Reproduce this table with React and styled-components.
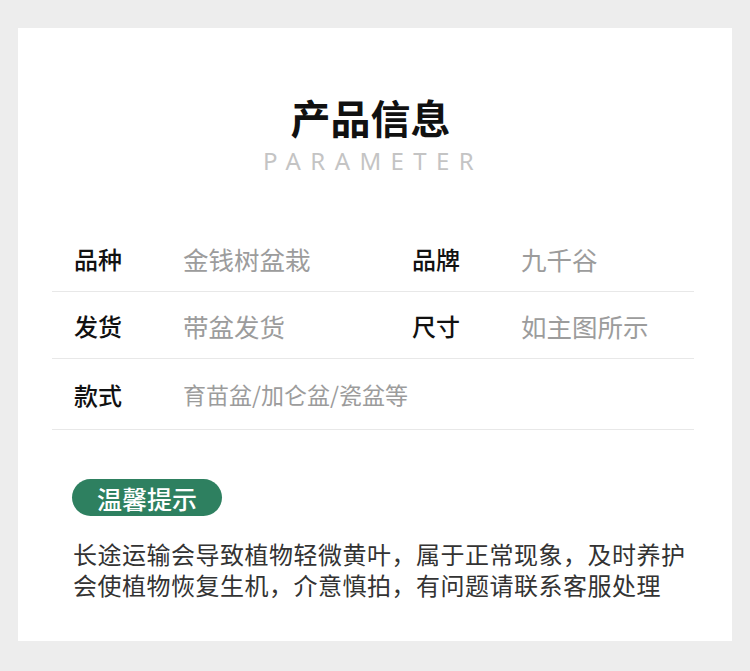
import React from "react";
import styled, { createGlobalStyle } from "styled-components";

const GlobalStyle = createGlobalStyle`
  html, body {
    margin: 0;
    padding: 0;
    background: #ededed;
    font-family: "Noto Sans CJK SC", "Noto Sans", sans-serif;
  }
`;

const Page = styled.div`
  padding: 28px 18px 30px;
`;

const Card = styled.div`
  background: #ffffff;
  padding: 69px 38px 40px 34px;
  height: 613px;
  box-sizing: border-box;
`;

const Title = styled.h1`
  margin: 0;
  padding-right: 5px;
  font-size: 40px;
  line-height: 40px;
  font-weight: 700;
  color: #111;
  text-align: center;
`;

const SubTitle = styled.div`
  margin-top: 12px;
  font-family: "Noto Sans", sans-serif;
  font-size: 24px;
  line-height: 24px;
  letter-spacing: 9.4px;
  color: #c4c4c4;
  text-align: center;
`;

const Table = styled.div`
  margin-top: 52px;
`;

const Row = styled.div`
  display: grid;
  grid-template-columns: 109px 229px 109px 1fr;
  align-items: center;
  height: ${(p) => p.$h || 66}px;
  padding-left: 22px;
  border-bottom: 1px solid #e8e8e8;
`;

const Label = styled.div`
  font-size: 24px;
  color: #111;
  font-weight: 500;
`;

const Value = styled.div`
  font-size: ${(p) => p.$size || 25.5}px;
  color: #9c9c9c;
  white-space: nowrap;
`;

const WideValue = styled(Value)`
  grid-column: 2 / span 3;
`;

const Notice = styled.div`
  margin-top: 49px;
  padding-left: 20px;
`;

const Badge = styled.span`
  display: inline-flex;
  align-items: center;
  height: 37px;
  padding: 0 25px;
  border-radius: 19px;
  background: #2e8060;
  color: #ffffff;
  font-size: 25px;
  font-weight: 500;
`;

const NoticeText = styled.p`
  margin: 22px 0 0;
  font-size: 24px;
  line-height: 31px;
  letter-spacing: 0.5px;
  color: #333;
  padding-left: 1px;
  white-space: nowrap;
`;

const rows = [
  [["品种", "金钱树盆栽"], ["品牌", "九千谷"]],
  [["发货", "带盆发货"], ["尺寸", "如主图所示"]],
];

export default function App() {
  return (
    <Page>
      <GlobalStyle />
      <Card>
        <Title>产品信息</Title>
        <SubTitle>PARAMETER</SubTitle>
        <Table>
          {rows.map((r, i) => (
            <Row key={i}>
              <Label>{r[0][0]}</Label>
              <Value>{r[0][1]}</Value>
              <Label>{r[1][0]}</Label>
              <Value>{r[1][1]}</Value>
            </Row>
          ))}
          <Row $h={70}>
            <Label>款式</Label>
            <WideValue $size={23}>育苗盆/加仑盆/瓷盆等</WideValue>
          </Row>
        </Table>
        <Notice>
          <Badge>温馨提示</Badge>
          <NoticeText>
            长途运输会导致植物轻微黄叶，属于正常现象，及时养护
            <br />
            会使植物恢复生机，介意慎拍，有问题请联系客服处理
          </NoticeText>
        </Notice>
      </Card>
    </Page>
  );
}
